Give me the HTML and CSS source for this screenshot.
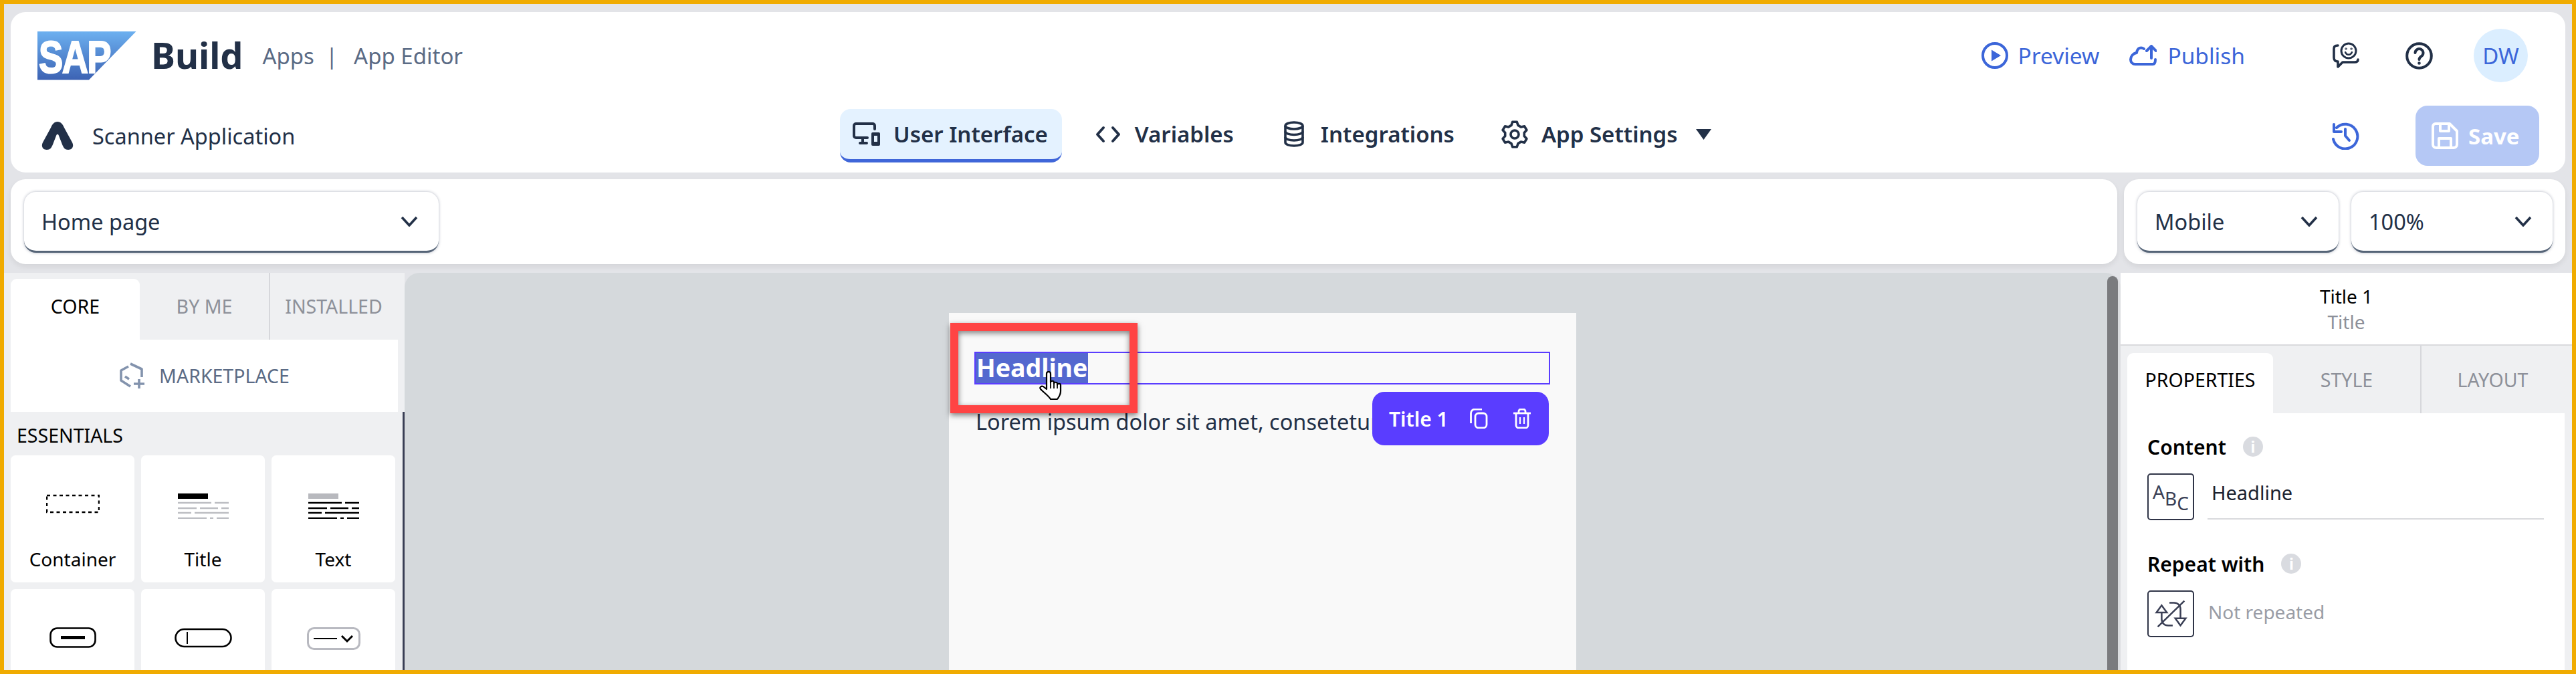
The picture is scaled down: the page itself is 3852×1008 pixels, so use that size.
FILE: index.html
```html
<!DOCTYPE html>
<html lang="en">
<head>
    <meta charset="UTF-8">
    <title>SAP Build Apps - App Editor</title>
    <link rel="stylesheet" href="styles.css">
</head>
<body>
<div class="frame">
    <div class="chrome">
        <header class="topbar">
            <div class="toprow">
                <div class="sap-logo"><span>SAP</span></div>
                <span class="brand">Build</span>
                <span class="crumb crumb-apps">Apps</span>
                <span class="crumb crumb-sep">|</span>
                <span class="crumb">App Editor</span>
                <div class="spacer"></div>
                <a class="link-action action-preview">
                    <svg width="40" height="40" viewBox="0 0 40 40"><circle cx="20" cy="20" r="18" fill="none" stroke="currentColor" stroke-width="4"/><path d="M15 11.5 L29 20 L15 28.5 Z" fill="currentColor"/></svg>
                    Preview
                </a>
                <a class="link-action action-publish">
                    <svg width="41" height="32" viewBox="0 0 41 32" fill="none" stroke="currentColor" stroke-width="4" stroke-linecap="round" stroke-linejoin="round"><path d="M33 20 V3 M26 9 L33 2 L40 9"/><path d="M22 6 C18 3 12 4 11 12 C5 13 2 18 2 22 C2 26 5 29 9 29 H35 C38 29 39 26 39 22"/></svg>
                    Publish
                </a>
                <svg class="icon-feedback" width="41" height="41" viewBox="0 0 41 41" fill="none" stroke="#223047" stroke-width="3.6" stroke-linecap="round" stroke-linejoin="round"><path d="M9 5 C4 5 3 7 3 10 V23 C3 27 5 29 9 29 V37 L16 30 H34 C38 30 39 28 39 26"/><circle cx="25" cy="13" r="11" stroke-width="3"/><circle cx="21" cy="10" r="1.2" stroke-width="1"/><circle cx="29" cy="10" r="1.2" stroke-width="1"/><path d="M20 15 C22 20 28 20 30 15" stroke-width="2.4"/></svg>
                <svg class="icon-help" width="41" height="41" viewBox="0 0 41 41" fill="none" stroke="#223047" stroke-width="4" stroke-linecap="round"><circle cx="20.5" cy="20.5" r="18.3"/><path d="M14.5 16 a6 6 0 1 1 9.5 5 c-2.4 1.6 -3.5 2.4 -3.5 5"/><circle cx="20.5" cy="31.5" r="1" stroke-width="2.6"/></svg>
                <div class="avatar">DW</div>
            </div>
            <div class="navrow">
                <div class="app-name">
                    <svg width="48" height="42" viewBox="0 0 48 42"><path d="M24 0 C29 0 32 4 34 9 L46 31 C49 37 46 42 40 42 C35 42 33 39 31 34 L26 21 C25 18 23 18 22 21 L17 34 C15 39 13 42 8 42 C2 42 -1 37 2 31 L14 9 C16 4 19 0 24 0 Z" fill="#223047"/></svg>
                    <span>Scanner Application</span>
                </div>
                <nav class="nav">
                    <a class="nav-item nav-active">
                        <svg width="42" height="36" viewBox="0 0 42 36" fill="none" stroke="#223047" stroke-width="4" stroke-linecap="round"><path d="M33 10 V5 a3 3 0 0 0 -3 -3 H5 a3 3 0 0 0 -3 3 V20 a3 3 0 0 0 3 3 H22"/><path d="M15 24 V30 M11 31 H21"/><rect x="28" y="15" width="13" height="20" rx="2" fill="#223047" stroke="none"/><rect x="32" y="20" width="5" height="9" fill="#e4f2ff" stroke="none"/></svg>
                        User Interface
                    </a>
                    <a class="nav-item">
                        <svg width="42" height="42" viewBox="0 0 42 42" fill="none" stroke="#223047" stroke-width="4" stroke-linecap="round" stroke-linejoin="round"><path d="M14 11 L5 21 L14 31 M28 11 L37 21 L28 31"/></svg>
                        Variables
                    </a>
                    <a class="nav-item">
                        <svg width="42" height="42" viewBox="0 0 42 42" fill="none" stroke="#223047" stroke-width="3.6"><ellipse cx="21" cy="8" rx="13" ry="5"/><path d="M8 8 V33 C8 36 14 38 21 38 S34 36 34 33 V8"/><path d="M8 16.5 C8 19.5 14 21.5 21 21.5 S34 19.5 34 16.5"/><path d="M8 25 C8 28 14 30 21 30 S34 28 34 25"/></svg>
                        Integrations
                    </a>
                    <a class="nav-item">
                        <svg width="42" height="42" viewBox="0 0 42 42" fill="none" stroke="#223047" stroke-width="3.6" stroke-linejoin="round"><path d="M16 7.4 L17.7 2.3 H24.3 L26 7.4 L30.3 9.9 L35.6 8.8 L38.9 14.5 L35.3 18.5 V23.5 L38.9 27.5 L35.6 33.2 L30.3 32.1 L26 34.6 L24.3 39.7 H17.7 L16 34.6 L11.7 32.1 L6.5 33.2 L3.1 27.5 L6.7 23.5 V18.5 L3.1 14.5 L6.5 8.8 L11.7 9.9 Z"/><circle cx="21" cy="21" r="6"/></svg>
                        App Settings
                        <svg class="caret" width="23" height="16" viewBox="0 0 23 16"><path d="M0 0 H23 L11.5 16 Z" fill="#223047"/></svg>
                    </a>
                </nav>
                <div class="spacer"></div>
                <svg class="icon-history" width="41" height="41" viewBox="0 0 41 41" fill="none" stroke="#3c66d9" stroke-width="4" stroke-linecap="round" stroke-linejoin="round"><path d="M7 8 A18.4 18.4 0 1 1 2 25"/><path d="M3 3 V14 H14"/><path d="M20 10 V20 L26 27"/></svg>
                <button class="save-btn">
                    <svg width="41" height="41" viewBox="0 0 41 41" fill="none" stroke="#fff" stroke-width="4" stroke-linejoin="round"><path d="M6 2 H27 L38 13 V33 a5 5 0 0 1 -5 5 H7 a5 5 0 0 1 -5 -5 V6 a4 4 0 0 1 4 -4 Z"/><path d="M13 3 V13 H26 V4"/><path d="M11 37 V24 H29 V37"/></svg>
                    Save
                </button>
            </div>
        </header>
        <div class="selectbar">
            <div class="panel panel-pages">
                <div class="select select-page"><span>Home page</span><svg class="chev" width="26" height="16" viewBox="0 0 26 16"><path d="M2 2 L13 14 L24 2" fill="none" stroke="#223047" stroke-width="3.6"/></svg></div>
            </div>
            <div class="panel panel-view">
                <div class="select select-view"><span>Mobile</span><svg class="chev" width="26" height="16" viewBox="0 0 26 16"><path d="M2 2 L13 14 L24 2" fill="none" stroke="#223047" stroke-width="3.6"/></svg></div>
                <div class="select select-view"><span>100%</span><svg class="chev" width="26" height="16" viewBox="0 0 26 16"><path d="M2 2 L13 14 L24 2" fill="none" stroke="#223047" stroke-width="3.6"/></svg></div>
            </div>
        </div>
    </div>

    <div class="workspace">
        <aside class="palette">
            <div class="tabs palette-tabs">
                <div class="tab tab-active">CORE</div>
                <div class="tab">BY ME</div>
                <div class="tab tab-divided">INSTALLED</div>
            </div>
            <div class="marketplace">
                <svg width="38" height="40" viewBox="0 0 38 40" fill="none" stroke="#8393ad" stroke-width="3.6" stroke-linejoin="round"><path d="M14 6 L3 12 V27 L17 36"/><path d="M17 2 L34 10 V22"/><path d="M9 21 L15 25"/><path d="M30 25 V39 M22 32 H38"/></svg>
                <span>MARKETPLACE</span>
            </div>
            <div class="palette-body">
                <div class="section-label">ESSENTIALS</div>
                <div class="cards">
                    <div class="card">
                        <svg class="card-icon" width="80" height="38" viewBox="0 0 80 38"><rect x="1" y="3" width="78" height="25" fill="none" stroke="#000" stroke-width="2.5" stroke-dasharray="5 4.5"/></svg>
                        <span>Container</span>
                    </div>
                    <div class="card">
                        <svg class="card-icon" width="76" height="38" viewBox="0 0 76 38"><rect width="45" height="8" fill="#000"/><path d="M0 14 H50 M55 14 H76 M0 22 H28 M33 22 H60 M65 22 H76 M0 29 H20 M25 29 H76 M0 37 H43 M48 37 H53 M58 37 H76" stroke="#bdbec3" stroke-width="2.5"/></svg>
                        <span>Title</span>
                    </div>
                    <div class="card">
                        <svg class="card-icon" width="76" height="38" viewBox="0 0 76 38"><rect width="45" height="8" fill="#b8b9be"/><path d="M0 14 H50 M55 14 H76 M0 22 H28 M33 22 H60 M65 22 H76 M0 29 H20 M25 29 H76 M0 37 H43 M48 37 H53 M58 37 H76" stroke="#000" stroke-width="2.5"/></svg>
                        <span>Text</span>
                    </div>
                    <div class="card">
                        <svg class="card-icon" width="70" height="32" viewBox="0 0 70 32"><rect x="1.5" y="1.5" width="67" height="28" rx="10" fill="none" stroke="#000" stroke-width="2.6"/><rect x="17" y="13" width="36" height="5" fill="#000"/></svg>
                    </div>
                    <div class="card">
                        <svg class="card-icon" width="86" height="32" viewBox="0 0 86 32"><rect x="1.5" y="3" width="83" height="26" rx="13" fill="none" stroke="#000" stroke-width="2.6"/><path d="M19 7 V25" stroke="#000" stroke-width="2"/></svg>
                    </div>
                    <div class="card">
                        <svg class="card-icon" width="80" height="34" viewBox="0 0 80 34"><rect x="1.5" y="1.5" width="77" height="31" rx="9" fill="none" stroke="#b8b9c0" stroke-width="3"/><path d="M10 17 H45" stroke="#000" stroke-width="2"/><path d="M52 13 L60 21 L68 13" fill="none" stroke="#000" stroke-width="3"/></svg>
                    </div>
                </div>
            </div>
        </aside>

        <main class="canvas">
            <div class="page">
                <div class="title-outline"><span class="title-selected">Headline</span></div>
                <p class="lorem">Lorem ipsum dolor sit amet, consetetur sadipscing</p>
                <div class="title-toolbar">
                    <span>Title 1</span>
                    <svg class="toolbar-copy" width="27" height="30" viewBox="0 0 27 30" fill="none" stroke="#fff" stroke-width="2.8"><rect x="8" y="7" width="17" height="22" rx="5"/><path d="M1.5 22 V7 a6 6 0 0 1 6 -6 H18"/></svg>
                    <svg class="toolbar-trash" width="26" height="30" viewBox="0 0 26 30" fill="none" stroke="#fff" stroke-width="2.8"><path d="M0 7 H26"/><path d="M8 6 V4 a3 3 0 0 1 3 -3 H15 a3 3 0 0 1 3 3 V6"/><path d="M4 7 V25 a4 4 0 0 0 4 4 H18 a4 4 0 0 0 4 -4 V7"/><path d="M10 13 V23 M16 13 V23" stroke-width="2.2"/></svg>
                </div>
                <div class="callout"></div>
                <svg class="hand-cursor" width="35" height="44" viewBox="0 0 35 44"><path d="M11 27 L11 4 C11 0 17 0 17 4 L17 17 C17 14 22 14 22 17 L22 19 C22 16 27 16 27 19 L27 21 C27 18 32 18 32 21 L32 30 C32 36 29 39 27 42 L17 42 C14 37 8 33 2 27 C0 24 3 22 6 23 Z" fill="#fff" stroke="#000" stroke-width="2.2" stroke-linejoin="round"/><path d="M17 17 V26 M22 19 V26 M27 21 V26" stroke="#000" stroke-width="1.8"/></svg>
            </div>
            <div class="scrollbar"></div>
        </main>

        <aside class="inspector">
            <div class="inspector-head">
                <div class="head-name">Title 1</div>
                <div class="head-type">Title</div>
            </div>
            <div class="tabs inspector-tabs">
                <div class="tab tab-active">PROPERTIES</div>
                <div class="tab">STYLE</div>
                <div class="tab tab-divided">LAYOUT</div>
            </div>
            <div class="inspector-body">
                <div class="prop-label">Content <i class="info">i</i></div>
                <div class="prop-row">
                    <div class="bind-box abc"><span class="abc-a">A</span><span class="abc-b">B</span><span class="abc-c">C</span></div>
                    <div class="prop-input">Headline</div>
                </div>
                <div class="prop-label prop-label-next">Repeat with <i class="info">i</i></div>
                <div class="prop-row">
                    <div class="bind-box">
                        <svg width="66" height="66" viewBox="0 0 68 68" fill="none" stroke="#3a3f55" stroke-width="2.6"><path d="M20 21 L28 32 H12 Z M49 52 L41 41 H57 Z"/><path d="M20 32 V42 C20 48 24 52 30 52 H37 M49 41 V27 C49 21 45 17 39 17 H32"/><path d="M14 54 L55 14"/></svg>
                    </div>
                    <div class="prop-muted">Not repeated</div>
                </div>
            </div>
        </aside>
    </div>
</div>
</body>
</html>
```

FILE: styles.css
```css
* {
    box-sizing: border-box;
}
body {
    margin: 0;
    font-family: "Noto Sans", sans-serif;
    color: #223047;
}
svg {
    flex: none;
    display: block;
}
.frame {
    width: 3852px;
    height: 1008px;
    border: 6px solid #f0ab00;
    background: #e3e4e8;
    overflow: hidden;
    display: flex;
    flex-direction: column;
}
.spacer {
    flex: 1;
}
.chrome {
    padding: 12px 10px 0;
    height: 402px;
}

/* top bar */
.topbar {
    height: 240px;
    background: #fff;
    border-radius: 22px;
}
.toprow {
    height: 130px;
    display: flex;
    align-items: center;
    padding: 0 56px 0 40px;
}
.sap-logo {
    width: 148px;
    height: 73px;
    clip-path: polygon(0 0, 100% 0, 52% 100%, 0 100%);
    background: linear-gradient(#6cb0f0, #3c62b3);
    color: #fff;
    font: bold 68px "Liberation Sans", sans-serif;
    line-height: 77px;
    padding-left: 2px;
}
.sap-logo span {
    display: inline-block;
    letter-spacing: -2px;
    -webkit-text-stroke: 2px #fff;
    transform: scaleX(0.8);
    transform-origin: left;
}
.brand {
    font-size: 54px;
    font-weight: 700;
    margin-left: 22px;
    margin-top: -3px;
}
.crumb {
    font-size: 33px;
    color: #5b6b85;
}
.crumb-apps {
    margin-left: 29px;
}
.crumb-sep {
    margin: 0 24px 0 17px;
}
.link-action {
    display: flex;
    align-items: center;
    gap: 15px;
    font-size: 33.5px;
    color: #3c66d9;
}
.action-publish {
    margin-left: 45px;
    gap: 16px;
}
.icon-feedback {
    margin-left: 130px;
}
.icon-help {
    margin-left: 69px;
}
.avatar {
    width: 81px;
    height: 80px;
    margin-left: 61px;
    border-radius: 50%;
    background: #dbeeff;
    color: #3c66d9;
    font-size: 33px;
    display: flex;
    align-items: center;
    justify-content: center;
}
.navrow {
    height: 110px;
    display: flex;
    align-items: flex-start;
    padding: 10px 39px 0 46px;
}
.app-name {
    width: 1194px;
    height: 90px;
    display: flex;
    align-items: center;
    gap: 28px;
    font-size: 32.5px;
}
.nav {
    display: flex;
    gap: 29px;
    margin-top: 5px;
}
.nav-item {
    height: 80px;
    padding: 0 21px 5px 19px;
    display: flex;
    align-items: center;
    gap: 19px;
    font-size: 33px;
    font-weight: 600;
    border-radius: 16px;
}
.nav-active {
    background: #e4f2ff;
    border-bottom: 5px solid #3f66d9;
    padding-bottom: 0;
}
.caret {
    margin-left: 8px;
}
.icon-history {
    margin: 25px 84px 0 0;
}
.save-btn {
    width: 185px;
    height: 90px;
    border: 0;
    border-radius: 18px;
    background: #b5c8f5;
    color: #fff;
    font-family: inherit;
    font-size: 33px;
    font-weight: 700;
    display: flex;
    align-items: center;
    gap: 14px;
    padding: 0 0 0 24px;
}

/* select row */
.selectbar {
    display: flex;
    gap: 10px;
    margin-top: 10px;
}
.panel {
    height: 127px;
    background: #fff;
    border-radius: 22px;
    box-shadow: 0 4px 8px rgba(0, 0, 0, 0.07);
    display: flex;
    padding-top: 19px;
}
.panel-pages {
    flex: 1;
    padding-left: 20px;
}
.panel-view {
    width: 660px;
    padding-left: 20px;
    gap: 19px;
}
.select {
    height: 91px;
    background: #fff;
    border-radius: 18px;
    border-bottom: 3px solid #556477;
    box-shadow: 0 0 4px rgba(60, 70, 100, 0.4);
    display: flex;
    align-items: center;
    justify-content: space-between;
    font-size: 32.5px;
}
.select-page {
    width: 620px;
    padding: 0 31px 0 26px;
}
.select-view {
    width: 301px;
    padding: 0 31px 0 26px;
}

/* workspace */
.workspace {
    flex: 1;
    display: flex;
    min-height: 0;
}
.palette {
    width: 599px;
    background: #eff0f2;
    display: flex;
    flex-direction: column;
}
.tabs {
    display: grid;
    font-size: 28.5px;
    color: #8d9099;
    text-align: center;
}
.palette-tabs {
    height: 100px;
    padding: 0 11px 0 10px;
    grid-template-columns: 193px 193px 1fr;
}
.tab {
    display: flex;
    align-items: center;
    justify-content: center;
}
.tab-active {
    margin-top: 9px;
    padding-bottom: 9px;
    background: #fff;
    color: #000;
    border-radius: 9px 9px 0 0;
}
.tab-divided {
    border-left: 2px solid #d6d7db;
}
.marketplace {
    height: 108px;
    margin: 0 10px;
    background: #fff;
    display: flex;
    align-items: center;
    justify-content: center;
    gap: 22px;
    color: #5b6b85;
    font-size: 28.5px;
}
.palette-body {
    flex: 1;
    border-right: 3px solid #3a3f55;
    padding-left: 10px;
    overflow: hidden;
}
.section-label {
    height: 65px;
    padding: 16px 0 0 9px;
    font-size: 28.5px;
    color: #000;
}
.cards {
    display: grid;
    grid-template-columns: repeat(3, 185px);
    grid-auto-rows: 190px;
    gap: 10px;
}
.card {
    background: #fff;
    border-radius: 7px;
    display: flex;
    flex-direction: column;
    align-items: center;
    padding-top: 57px;
    font-size: 28px;
    color: #000;
}
.card-icon {
    margin-bottom: 41px;
}

/* canvas */
.canvas {
    flex: 1;
    background: #d5d9dc;
    border-radius: 22px 22px 0 0;
    position: relative;
    padding: 60px 0 0 814px;
    border-right: 4px solid #dcdde0;
}
.page {
    position: relative;
    width: 938px;
    height: 540px;
    background: #f9f9f9;
    padding: 58px 0 0 38px;
}
.title-outline {
    width: 861px;
    height: 49px;
    border: 2px solid #5a3dff;
    display: flex;
}
.title-selected {
    background: #5468cf;
    color: #fff;
    font-size: 37.5px;
    font-weight: 700;
    line-height: 43px;
    padding: 0 1px;
}
.lorem {
    margin: 35px 0 0 2px;
    font-size: 32.5px;
    line-height: 42px;
    white-space: nowrap;
}
.title-toolbar {
    position: absolute;
    left: 633px;
    top: 118px;
    width: 264px;
    height: 80px;
    border-radius: 18px;
    background: #5a3dff;
    color: #fff;
    display: flex;
    align-items: center;
    padding-left: 25px;
    font-size: 30px;
    font-weight: 600;
}
.toolbar-copy {
    position: absolute;
    left: 146px;
    top: 25px;
}
.toolbar-trash {
    position: absolute;
    left: 211px;
    top: 25px;
}
.callout {
    position: absolute;
    left: 2px;
    top: 15px;
    width: 280px;
    height: 135px;
    border: 12px solid #ff4444;
    box-shadow: 0 3px 8px rgba(0, 0, 0, 0.5), inset 0 3px 8px rgba(0, 0, 0, 0.5);
}
.hand-cursor {
    position: absolute;
    left: 135px;
    top: 87px;
}
.scrollbar {
    position: absolute;
    right: 0;
    top: 5px;
    bottom: 0;
    width: 16px;
    background: #7a7b7e;
    border-radius: 8px 8px 0 0;
}

/* inspector */
.inspector {
    width: 675px;
    background: #eff0f2;
    display: flex;
    flex-direction: column;
}
.inspector-head {
    height: 109px;
    background: #fff;
    border-bottom: 2px solid #d9dadd;
    text-align: center;
    font-size: 28px;
    color: #000;
    padding-top: 16px;
    line-height: 38px;
}
.head-type {
    color: #8d9099;
}
.inspector-tabs {
    height: 101px;
    padding: 0 12px 0 10px;
    grid-template-columns: 218px 220px 1fr;
}
.inspector-tabs .tab-active {
    margin-top: 11px;
    padding-bottom: 11px;
}
.inspector-body {
    flex: 1;
    margin: 0 11px 0 10px;
    background: #fff;
    padding: 30px 30px 0;
}
.prop-label {
    display: flex;
    align-items: center;
    gap: 25px;
    height: 40px;
    font-size: 30px;
    font-weight: 600;
    color: #000;
}
.prop-label-next {
    margin-top: 45px;
}
.info {
    width: 30px;
    height: 30px;
    border-radius: 50%;
    background: #d9dbe0;
    color: #fff;
    font-style: normal;
    font-weight: 700;
    font-size: 23px;
    text-align: center;
    line-height: 30px;
}
.prop-row {
    display: flex;
    margin-top: 20px;
}
.bind-box {
    width: 70px;
    height: 70px;
    border: 2px solid #2f3447;
    border-radius: 5px;
    flex: none;
}
.abc {
    display: flex;
    justify-content: center;
    font-size: 28px;
    color: #3a3f55;
    line-height: 30px;
}
.abc-a {
    margin-top: 10px;
}
.abc-b {
    margin-top: 20px;
}
.abc-c {
    margin-top: 27px;
}
.prop-input {
    width: 503px;
    height: 69px;
    margin-left: 20px;
    padding: 9px 0 0 6px;
    border-bottom: 2px solid #d9dadd;
    font-size: 29px;
    color: #1c2230;
}
.prop-muted {
    margin-left: 21px;
    padding-top: 13px;
    font-size: 28px;
    color: #9a9da6;
}
```
